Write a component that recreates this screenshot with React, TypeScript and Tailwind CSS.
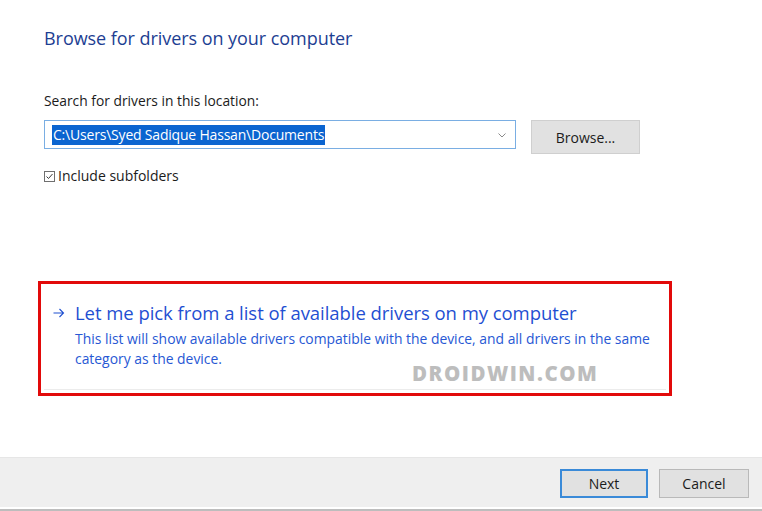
import React from "react";

const font = { fontFamily: '"Open Sans", "Noto Sans", sans-serif' };

const App = () => {
  return (
    <div
      className="w-[762px] h-[511px] bg-white flex flex-col overflow-hidden"
      style={font}
    >
      {/* body */}
      <div className="flex-1 flex flex-col pl-[44px] pt-[25px]">
        <h1 className="text-[18px] leading-[26px] text-[#1d3e92] tracking-[-0.05px]">
          Browse for drivers on your computer
        </h1>

        <p className="mt-[41px] text-[13.8px] leading-[18px] text-[#1b1b1b]">
          Search for drivers in this location:
        </p>

        {/* path row */}
        <div className="mt-[10px] flex items-start gap-[15px]">
          <div className="w-[472px] h-[29px] border border-[#7aaee3] flex items-center pl-[7px] pr-[9px]">
            <span className="bg-[#0a64d0] text-white text-[14px] leading-[20px] px-[1px] tracking-[-0.2px]">
              C:\Users\Syed Sadique Hassan\Documents
            </span>
            <div className="flex-1" />
            <svg width="8" height="5" viewBox="0 0 8 5" className="mt-[1px]">
              <path d="M0.5 0.5 L4 4 L7.5 0.5" fill="none" stroke="#8a8a8a" strokeWidth="1" />
            </svg>
          </div>
          <button className="w-[109px] h-[34px] bg-[#e1e1e1] border border-[#cfcfcf] text-[14px] text-[#1b1b1b] flex items-center justify-center">
            Browse...
          </button>
        </div>

        {/* include subfolders */}
        <div className="mt-[13px] flex items-center gap-[3px] text-[14px] leading-[18px] text-[#1b1b1b]">
          <svg width="11" height="11" viewBox="0 0 11 11">
            <rect x="0.5" y="0.5" width="10" height="10" fill="white" stroke="#6f6f6f" />
            <path d="M2.5 5.5 L4.5 7.5 L8.5 3" fill="none" stroke="#3a3a3a" strokeWidth="1" />
          </svg>
          <span>Include subfolders</span>
        </div>

        {/* command link, highlighted */}
        <div className="relative mt-[96px] -ml-[6px] w-[634px] h-[115px] border-[3px] border-[#e20a0a] flex flex-col pl-[12px] pt-[15px]">
          <div className="flex items-start gap-[10px]">
            <svg width="12" height="10" viewBox="0 0 12 10" className="mt-[9px]">
              <path d="M0.5 5 H10.5 M6.5 1 L10.5 5 L6.5 9" fill="none" stroke="#1f50d0" strokeWidth="1.1" />
            </svg>
            <div className="flex flex-col">
              <span className="text-[18.5px] leading-[27px] text-[#1f4fd2] tracking-[-0.05px]">
                Let me pick from a list of available drivers on my computer
              </span>
              <span className="mt-[3px] w-[590px] text-[13.9px] leading-[20px] text-[#2758d4]">
                This list will show available drivers compatible with the device, and all drivers in the same
                <br />
                category as the device.
              </span>
            </div>
          </div>
          <div className="absolute left-[3px] right-[3px] bottom-[3px] h-px bg-[#ececec]" />
          <span className="absolute left-[371px] top-[77px] text-[20.5px] leading-[24px] font-extrabold tracking-[1.5px] text-[#bdbdbd]">
            DROIDWIN.COM
          </span>
        </div>
      </div>

      {/* footer */}
      <div className="h-[50px] bg-[#efefef] border-t border-[#e6e6e6] flex items-start justify-end gap-[11px] pr-[13px] pt-[11px]">
        <button className="w-[88px] h-[29px] bg-[#e1e1e1] border-2 border-[#3a8ad8] text-[14px] text-[#1b1b1b] flex items-center justify-center">
          Next
        </button>
        <button className="w-[90px] h-[29px] bg-[#e1e1e1] border border-[#b9b9b9] text-[14px] text-[#1b1b1b] flex items-center justify-center">
          Cancel
        </button>
      </div>
      <div className="h-[2px] bg-white" />
      <div className="h-[2px] bg-[#bdbdbd]" />
    </div>
  );
};

export default App;
